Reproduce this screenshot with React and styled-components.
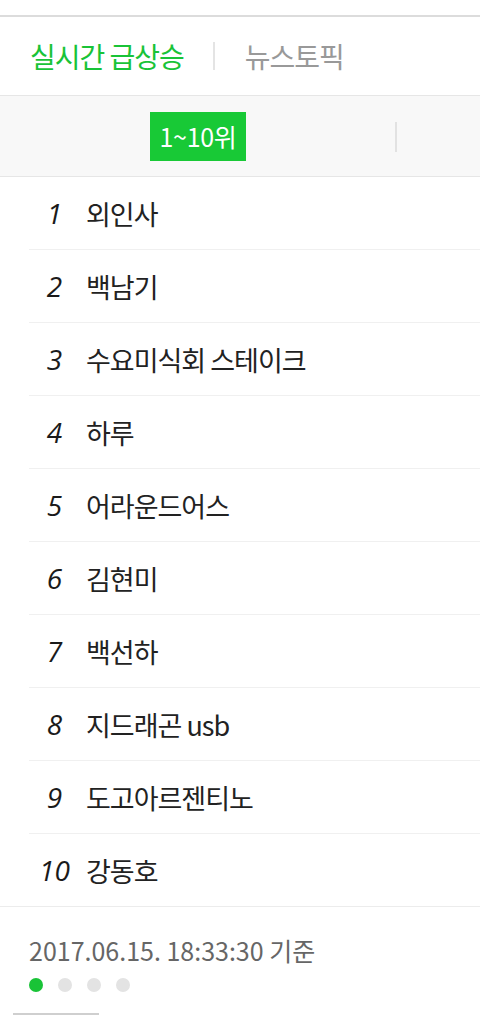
import React from 'react';
import styled, { createGlobalStyle } from 'styled-components';

const GlobalStyle = createGlobalStyle`
  html, body {
    margin: 0;
    padding: 0;
    background: #fff;
  }
  body {
    font-family: "Noto Sans CJK KR", "Noto Sans", sans-serif;
    -webkit-font-smoothing: antialiased;
  }
`;

const Page = styled.div`
  width: 480px;
  padding-top: 15px;
  overflow: hidden;
`;

const TabBar = styled.div`
  display: flex;
  align-items: center;
  height: 78px;
  padding-left: 30px;
  border-top: 2px solid #dcdcdc;
  border-bottom: 1px solid #e6e6e6;
`;

const Tab = styled.div`
  font-size: 28px;
  letter-spacing: -1px;
  color: ${props => (props.active ? '#19c337' : '#999')};
  line-height: 1;
`;

const TabDivider = styled.span`
  width: 2px;
  height: 28px;
  background: #e4e4e4;
  margin: 0 30px 0 29px;
`;

const SubNav = styled.div`
  display: flex;
  align-items: center;
  height: 80px;
  background: #f8f8f8;
  border-bottom: 1px solid #e6e6e6;
`;

const SubCell = styled.div`
  position: relative;
  flex: 0 0 396px;
  display: flex;
  align-items: center;
  justify-content: center;
  height: 100%;

  &::after {
    content: '';
    position: absolute;
    right: -1px;
    top: 26px;
    width: 2px;
    height: 30px;
    background: #e2e2e2;
  }
`;

const Pill = styled.div`
  display: flex;
  align-items: center;
  justify-content: center;
  width: 96px;
  height: 49px;
  background: #18c936;
  color: #fff;
  font-size: 25px;
  letter-spacing: -0.3px;
`;

const List = styled.ol`
  list-style: none;
  margin: 0;
  padding: 0;
  border-bottom: 1px solid #ececec;
`;

const Row = styled.li`
  display: flex;
  align-items: center;
  height: 72px;
  margin-left: 29px;
  border-bottom: 1px solid #f0f0f0;

  &:last-child {
    border-bottom: none;
  }
`;

const Rank = styled.span`
  width: 51px;
  margin-right: 6px;
  text-align: center;
  font-family: "Open Sans", sans-serif;
  font-style: italic;
  font-weight: 400;
  font-size: 28px;
  color: #1a1a1a;
`;

const Keyword = styled.span`
  font-size: 27px;
  color: #222;
  letter-spacing: -1px;
`;

const Footer = styled.div`
  padding: 26px 0 0 29px;
`;

const Stamp = styled.div`
  font-size: 25px;
  color: #666;
  letter-spacing: 0;
  line-height: 34px;
`;

const Dots = styled.div`
  display: flex;
  gap: 15px;
  margin-top: 11px;
`;

const Dot = styled.span`
  width: 14px;
  height: 14px;
  border-radius: 50%;
  background: ${props => (props.active ? '#19c337' : '#e3e3e3')};
`;

const BottomBar = styled.div`
  width: 86px;
  height: 2px;
  background: #cfcfcf;
  margin: 21px 0 0 -16px;
`;

const keywords = [
  '외인사',
  '백남기',
  '수요미식회 스테이크',
  '하루',
  '어라운드어스',
  '김현미',
  '백선하',
  '지드래곤 usb',
  '도고아르젠티노',
  '강동호',
];

export default function App() {
  return (
    <>
      <GlobalStyle />
      <Page>
        <TabBar>
          <Tab active>실시간 급상승</Tab>
          <TabDivider />
          <Tab>뉴스토픽</Tab>
        </TabBar>
        <SubNav>
          <SubCell>
            <Pill>1~10위</Pill>
          </SubCell>
        </SubNav>
        <List>
          {keywords.map((word, i) => (
            <Row key={word}>
              <Rank>{i + 1}</Rank>
              <Keyword>{word}</Keyword>
            </Row>
          ))}
        </List>
        <Footer>
          <Stamp>2017.06.15. 18:33:30 기준</Stamp>
          <Dots>
            <Dot active />
            <Dot />
            <Dot />
            <Dot />
          </Dots>
          <BottomBar />
        </Footer>
      </Page>
    </>
  );
}
